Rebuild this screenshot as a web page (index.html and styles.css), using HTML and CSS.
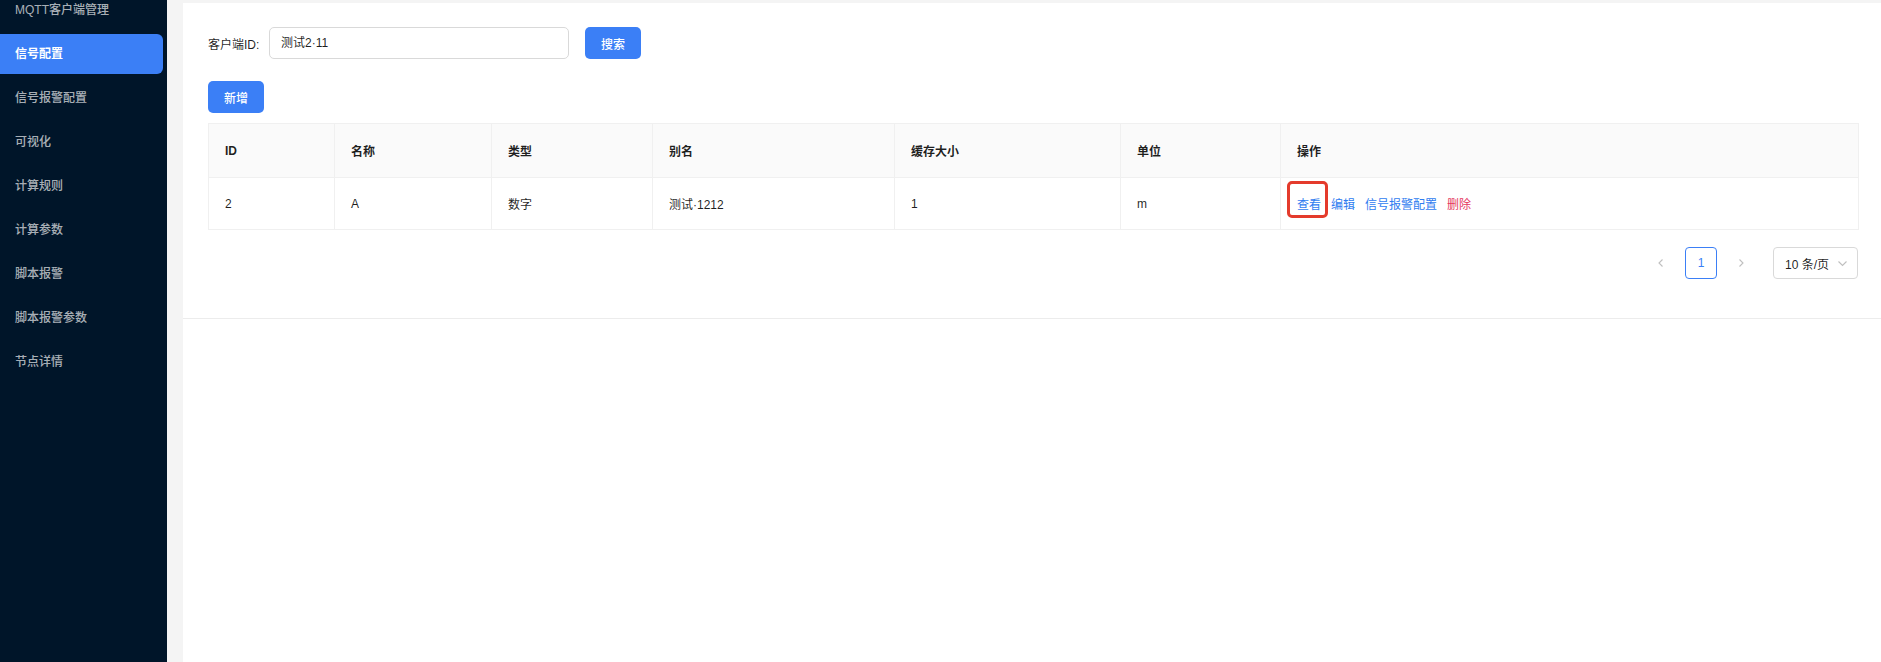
FILE: index.html
```html
<!DOCTYPE html>
<html lang="zh-CN">
<head>
<meta charset="utf-8">
<title>信号配置</title>
<link rel="stylesheet" href="styles.css">
</head>
<body>
<div class="layout">
  <aside class="sider">
    <ul class="menu">
      <li class="menu-item">MQTT客户端管理</li>
      <li class="menu-item active">信号配置</li>
      <li class="menu-item">信号报警配置</li>
      <li class="menu-item">可视化</li>
      <li class="menu-item">计算规则</li>
      <li class="menu-item">计算参数</li>
      <li class="menu-item">脚本报警</li>
      <li class="menu-item">脚本报警参数</li>
      <li class="menu-item">节点详情</li>
    </ul>
  </aside>
  <main class="main">
    <div class="content">
      <section class="card">
        <div class="search-row">
          <label class="form-label">客户端ID:</label>
          <div class="input">测试2·11</div>
          <button class="btn btn-primary search-btn">搜索</button>
        </div>
        <div class="toolbar">
          <button class="btn btn-primary">新增</button>
        </div>
        <table class="table">
          <colgroup>
            <col class="c1"><col class="c2"><col class="c3"><col class="c4"><col class="c5"><col class="c6"><col class="c7">
          </colgroup>
          <thead>
            <tr>
              <th>ID</th><th>名称</th><th>类型</th><th>别名</th><th>缓存大小</th><th>单位</th><th>操作</th>
            </tr>
          </thead>
          <tbody>
            <tr>
              <td>2</td><td>A</td><td>数字</td><td>测试·1212</td><td>1</td><td>m</td>
              <td class="ops">
                <span class="ops-inner">
                  <a class="link highlight">查看<span class="mark"></span></a>
                  <a class="link">编辑</a>
                  <a class="link">信号报警配置</a>
                  <a class="link danger">删除</a>
                </span>
              </td>
            </tr>
          </tbody>
        </table>
        <div class="pagination">
          <span class="pg-arrow">
            <svg width="10" height="10" viewBox="0 0 10 10"><path d="M6.5 1.5 L3 5 L6.5 8.5" fill="none" stroke="#bfbfbf" stroke-width="1.1"/></svg>
          </span>
          <span class="pg-item">1</span>
          <span class="pg-arrow">
            <svg width="10" height="10" viewBox="0 0 10 10"><path d="M3.5 1.5 L7 5 L3.5 8.5" fill="none" stroke="#bfbfbf" stroke-width="1.1"/></svg>
          </span>
          <span class="pg-select">
            <span class="pg-select-text">10 条/页</span>
            <svg width="11" height="11" viewBox="0 0 11 11"><path d="M1.5 3.5 L5.5 7.5 L9.5 3.5" fill="none" stroke="#bfbfbf" stroke-width="1.1"/></svg>
          </span>
        </div>
      </section>
    </div>
  </main>
</div>
</body>
</html>
```

FILE: styles.css
```css
* { box-sizing: border-box; }
html, body {
  margin: 0;
  padding: 0;
  height: 100%;
}
body {
  font-family: "Liberation Sans", "Noto Sans CJK SC", sans-serif;
  font-size: 12px;
  color: rgba(0, 0, 0, 0.88);
  background: #ffffff;
  overflow: hidden;
}
.layout {
  display: flex;
  height: 662px;
}
.sider {
  width: 167px;
  flex: 0 0 167px;
  background: #001529;
  overflow: hidden;
}
.menu {
  list-style: none;
  margin: -10px 0 0 0;
  padding: 0;
}
.menu-item {
  height: 40px;
  line-height: 40px;
  margin-bottom: 4px;
  width: 163px;
  padding-left: 15px;
  color: rgba(255, 255, 255, 0.68);
  font-weight: 500;
  font-size: 12px;
  white-space: nowrap;
}
.menu-item.active {
  background: #3b7ff6;
  color: #ffffff;
  font-weight: 700;
  border-radius: 0 6px 6px 0;
}
.main {
  flex: 1;
  background: #f4f4f4;
  padding: 3px 0 0 16px;
  display: flex;
  flex-direction: column;
}
.content {
  flex: 1;
  background: #ffffff;
}
.card {
  background: #ffffff;
  padding: 24px 23px 39px 25px;
  border-bottom: 1px solid #ececec;
}
.search-row {
  display: flex;
  align-items: center;
  height: 32px;
}
.form-label {
  width: 61px;
  color: rgba(0, 0, 0, 0.88);
  white-space: nowrap;
}
.input {
  width: 300px;
  height: 32px;
  border: 1px solid #d9d9d9;
  border-radius: 5px;
  padding: 0 11px;
  line-height: 30px;
  color: rgba(0, 0, 0, 0.88);
}
.search-btn {
  margin-left: 16px;
}
.btn {
  font-family: inherit;
  font-size: 12px;
  height: 32px;
  width: 56px;
  border: none;
  border-radius: 5px;
  cursor: pointer;
  padding: 0;
}
.btn-primary {
  background: #3b7ff6;
  color: #ffffff;
  font-weight: 500;
}
.toolbar {
  margin-top: 22px;
  margin-bottom: 10px;
  height: 32px;
}
.table {
  width: 1650px;
  border-collapse: collapse;
  table-layout: fixed;
  border: 1px solid #f0f0f0;
}
.c1 { width: 126px; }
.c2 { width: 157px; }
.c3 { width: 161px; }
.c4 { width: 242px; }
.c5 { width: 226px; }
.c6 { width: 160px; }
.c7 { width: 578px; }
.table th,
.table td {
  text-align: left;
  padding: 0 16px;
  border: 1px solid #f0f0f0;
  white-space: nowrap;
}
.table th {
  height: 54px;
  background: #fafafa;
  font-weight: 700;
  color: rgba(0, 0, 0, 0.88);
}
.table td {
  height: 52px;
  color: rgba(0, 0, 0, 0.88);
}
.ops-inner {
  display: inline-flex;
  gap: 10px;
}
.link {
  color: #2f7cf0;
  text-decoration: none;
  cursor: pointer;
}
.link.danger {
  color: #e5385e;
}
.highlight {
  position: relative;
}
.mark {
  position: absolute;
  left: -10px;
  top: -14px;
  width: 41px;
  height: 37px;
  border: 3px solid #e43b2c;
  border-radius: 5px;
}
.pagination {
  display: flex;
  justify-content: flex-end;
  align-items: center;
  margin-top: 17px;
  margin-right: 1px;
  height: 32px;
}
.pg-arrow {
  width: 32px;
  height: 32px;
  display: flex;
  align-items: center;
  justify-content: center;
}
.pg-item {
  width: 32px;
  height: 32px;
  margin: 0 8px;
  border: 1px solid #3b7ff6;
  border-radius: 4px;
  color: #3b7ff6;
  display: flex;
  align-items: center;
  justify-content: center;
  font-size: 12px;
}
.pg-select {
  margin-left: 16px;
  width: 85px;
  height: 32px;
  border: 1px solid #d9d9d9;
  border-radius: 4px;
  display: flex;
  align-items: center;
  justify-content: space-between;
  padding: 0 9px 0 11px;
  color: rgba(0, 0, 0, 0.88);
}
.pg-select-text {
  font-size: 12px;
  white-space: nowrap;
}
```
